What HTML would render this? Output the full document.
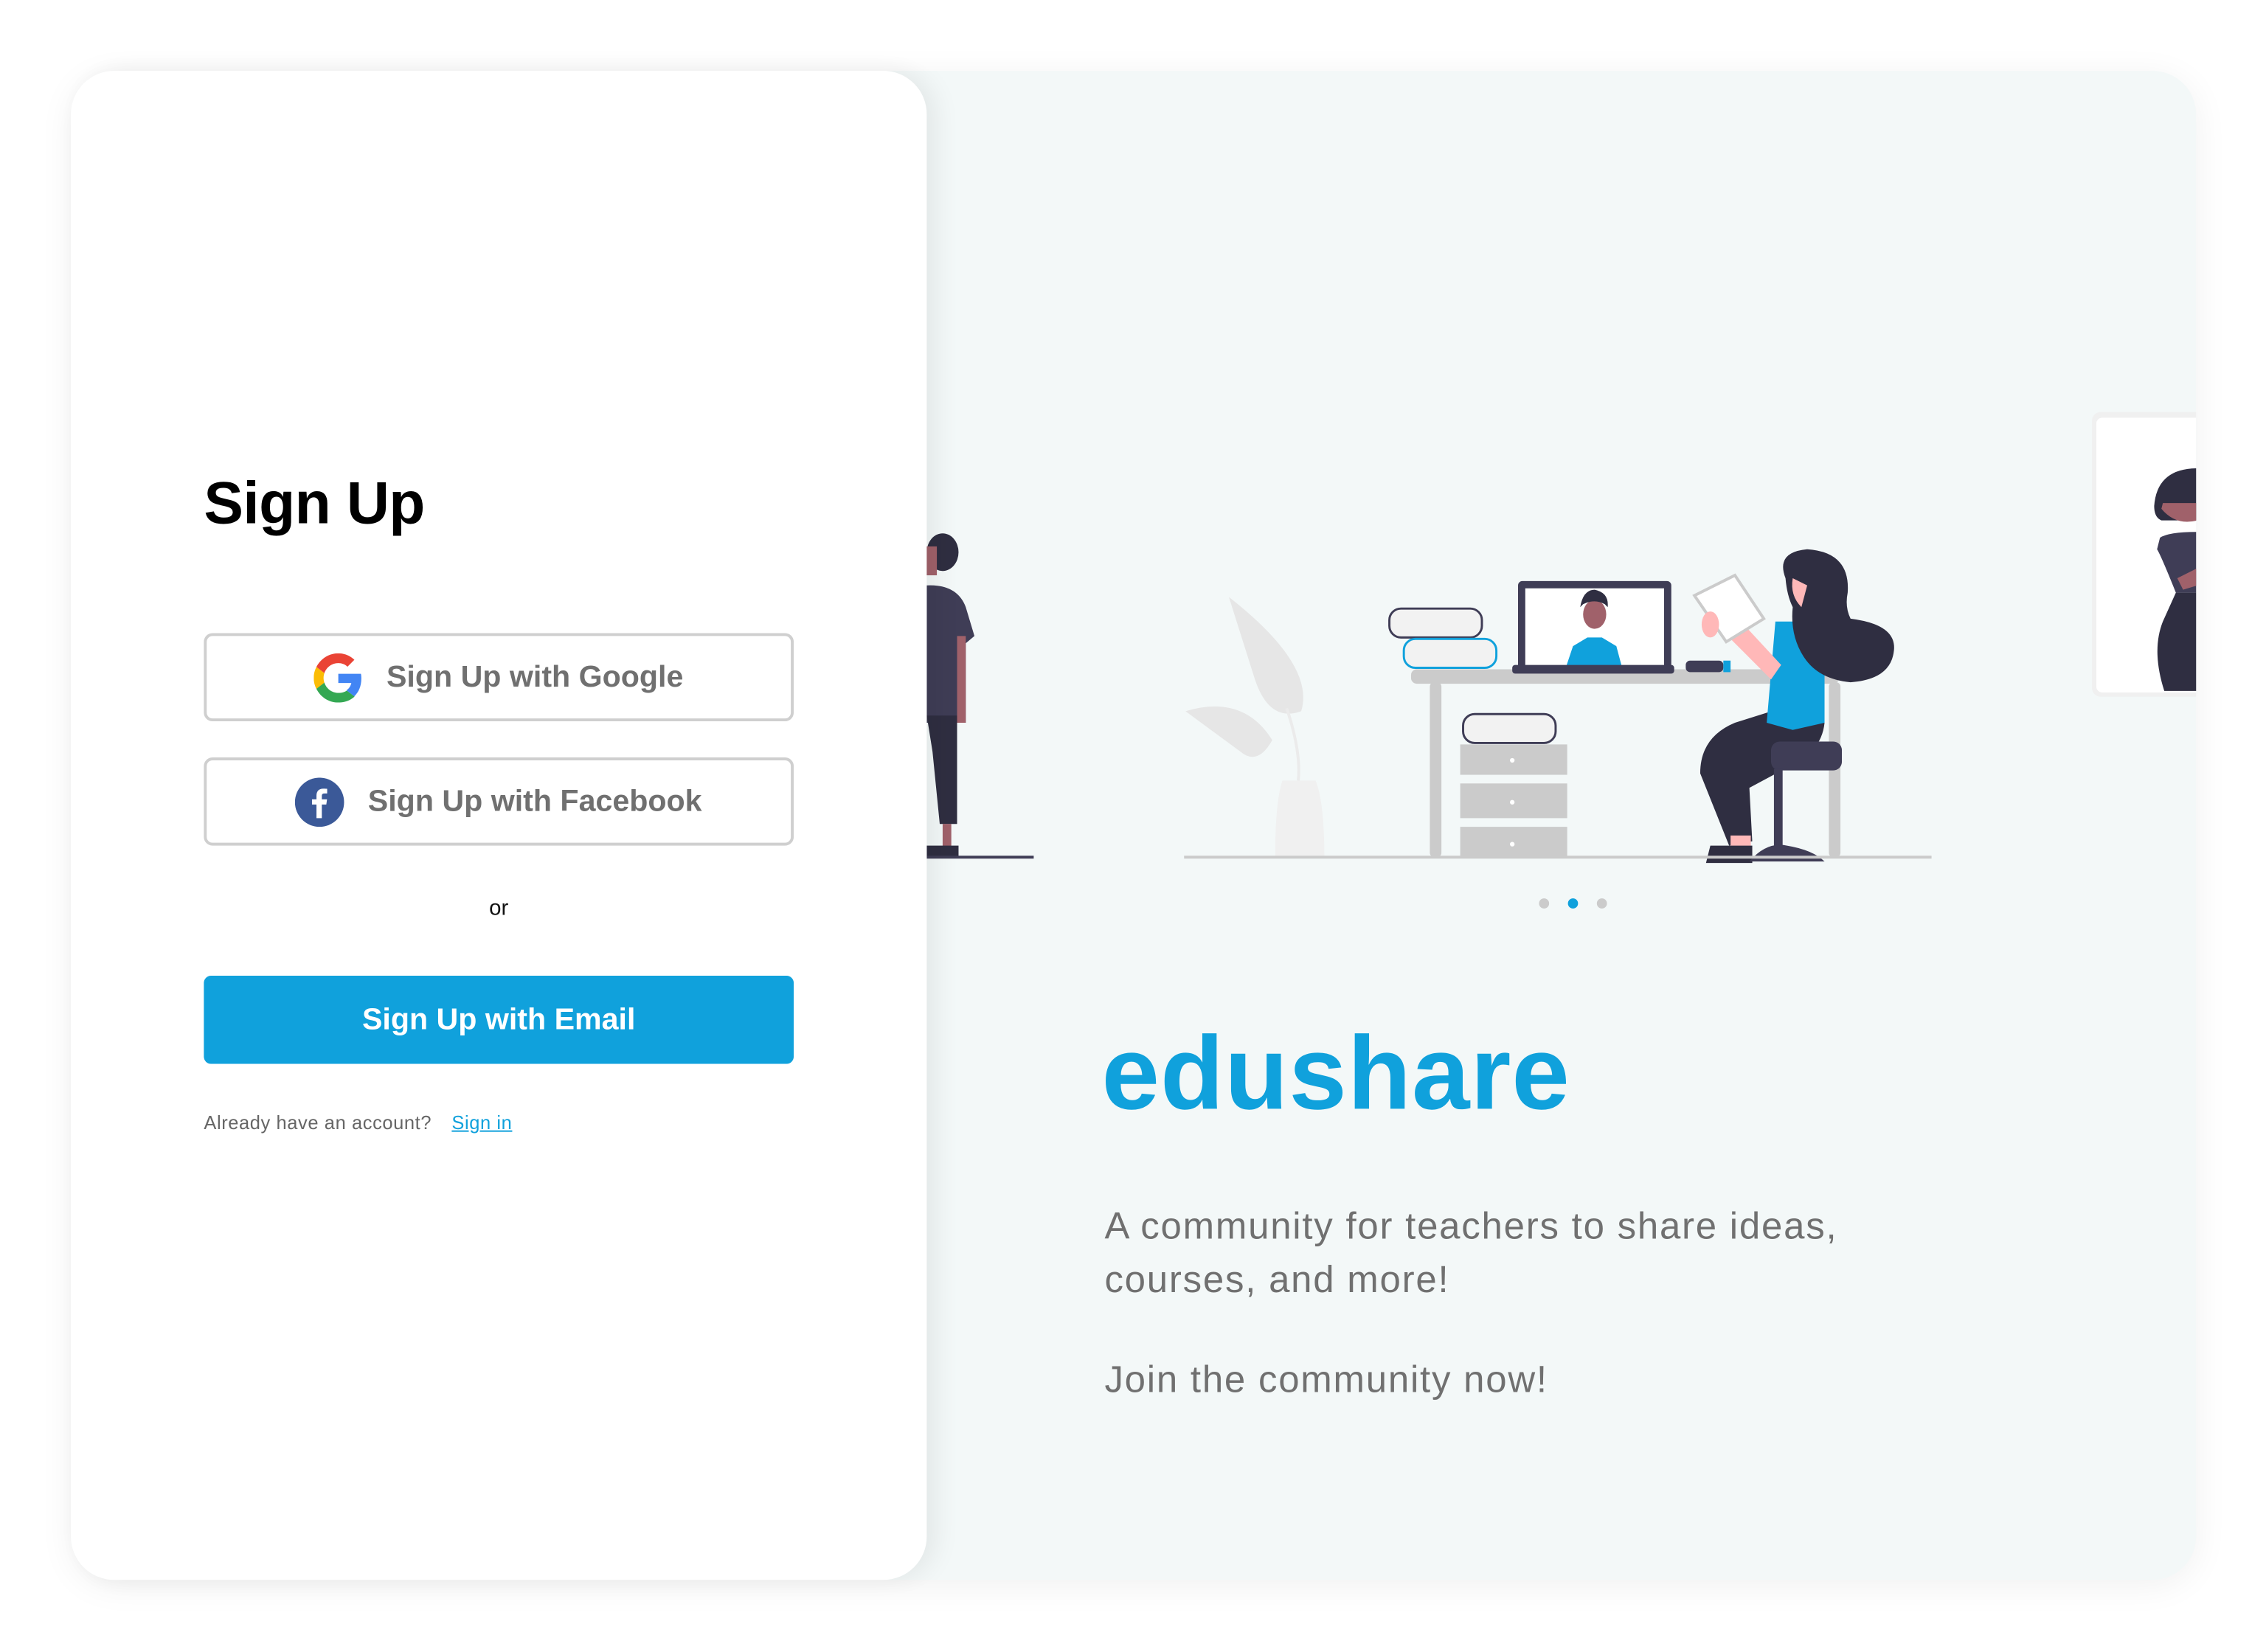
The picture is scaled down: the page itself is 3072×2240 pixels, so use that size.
<!DOCTYPE html>
<html><head><meta charset="utf-8"><style>
html,body{margin:0;padding:0;background:#fff;width:3072px;height:2240px;overflow:hidden}
#w{position:absolute;left:0;top:0;width:1568px;height:1143px;transform:scale(1.96);transform-origin:0 0;font-family:"Liberation Sans",sans-serif}
.card{position:absolute;left:49px;top:49px;width:1470px;height:1044px;border-radius:30px;background:#f3f8f8;box-shadow:0 4px 24px rgba(0,0,0,.06);overflow:hidden}
.left{position:absolute;left:49px;top:49px;width:592px;height:1044px;border-radius:30px;background:#fff;box-shadow:6px 0 18px rgba(0,0,0,.07);z-index:3}
h1{position:absolute;left:92px;top:276px;margin:0;font-size:41px;font-weight:bold;color:#000;letter-spacing:-0.3px}
.btn{position:absolute;left:92px;width:404px;height:57px;border:2px solid #cfcfcf;border-radius:6px;box-sizing:content-box;color:#707070;font-size:21px;font-weight:bold;display:flex;align-items:center;justify-content:center}
.btn svg{margin-right:16px}
.or{position:absolute;left:0;width:592px;top:571px;text-align:center;font-size:15px;color:#111}
.em{position:absolute;left:92px;top:626px;width:408px;height:61px;background:#10a1dc;border-radius:5px;color:#fff;font-size:21px;font-weight:bold;display:flex;align-items:center;justify-content:center}
.al{position:absolute;left:92px;top:720px;font-size:13px;color:#666;letter-spacing:0.3px}
.al a{color:#10a1dc;text-decoration:underline;margin-left:10px}
.brand{position:absolute;left:762px;top:702px;font-size:72px;font-weight:bold;color:#10a1dc;letter-spacing:0.5px}
.p{position:absolute;left:764px;font-size:26px;color:#707070;line-height:37px;letter-spacing:0.9px}
</style></head><body><div id="w">
<div class="card"></div>
<svg style="position:absolute;left:0;top:0" width="1568" height="1143" viewBox="0 0 1568 1143">
<defs><clipPath id="c"><rect x="49" y="49" width="1470" height="1044" rx="30"/></clipPath></defs>
<g clip-path="url(#c)">
<ellipse cx="652" cy="382" rx="11" ry="13" fill="#2f2e41"/>
<rect x="640" y="378" width="8" height="20" fill="#a0616a"/>
<path d="M641 405 Q662 404 668 420 L674 440 L668 445 L668 500 L641 500Z" fill="#3f3d56"/>
<rect x="662" y="440" width="6" height="60" fill="#a0616a"/>
<path d="M641 495 L662 495 L662 570 L650 570 L645 520Z" fill="#2f2e41"/>
<rect x="652" y="570" width="6" height="17" fill="#a0616a"/>
<rect x="641" y="585" width="22" height="8" fill="#2f2e41"/>
<rect x="641" y="592" width="74" height="2" fill="#3f3d56"/>
<rect x="1447" y="285" width="90" height="197" rx="6" fill="#f0f0f0"/>
<rect x="1450" y="289" width="90" height="190" rx="4" fill="#fff"/>
<path d="M1490 350 Q1492 324 1520 324 L1520 360 L1495 360 Q1490 358 1490 350Z" fill="#2f2e41"/>
<path d="M1495 352 Q1505 364 1520 360 L1520 348 L1496 348Z" fill="#a0616a"/>
<path d="M1494 372 Q1500 368 1520 368 L1520 410 L1505 410 Q1495 385 1492 380Z" fill="#3f3d56"/>
<path d="M1506 400 L1520 393 L1520 405 L1510 408Z" fill="#a0616a"/>
<path d="M1505 410 L1520 410 L1520 478 L1497 478 Q1488 450 1496 430Z" fill="#2f2e41"/>
<path d="M850 413 Q910 460 900 492 Q878 500 868 470 Z" fill="#e6e6e6"/>
<path d="M820 492 Q860 480 880 512 Q870 530 858 520 Z" fill="#e6e6e6"/>
<path d="M890 490 Q900 520 898 540" stroke="#ebebeb" stroke-width="2" fill="none"/>
<path d="M887 540 L910 540 Q916 555 916 593 L882 593 Q882 555 887 540Z" fill="#f0f0f0"/>
<rect x="976" y="463" width="296" height="10" rx="4" fill="#cbcbcb"/>
<rect x="989" y="472" width="8" height="121" rx="3" fill="#cbcbcb"/>
<rect x="1265" y="472" width="8" height="121" rx="3" fill="#cbcbcb"/>
<rect x="1010" y="515" width="74" height="21" fill="#cbcbcb"/>
<rect x="1010" y="542" width="74" height="24" fill="#cbcbcb"/>
<rect x="1010" y="572" width="74" height="21" fill="#cbcbcb"/>
<circle cx="1046" cy="526" r="1.6" fill="#fff"/><circle cx="1046" cy="555" r="1.6" fill="#fff"/><circle cx="1046" cy="584" r="1.6" fill="#fff"/>
<rect x="1012" y="494" width="64" height="20" rx="8" fill="#f2f2f2" stroke="#3f3d56" stroke-width="1.5"/>
<rect x="961" y="421" width="64" height="20" rx="8" fill="#f2f2f2" stroke="#3f3d56" stroke-width="1.5"/>
<rect x="971" y="442" width="64" height="20" rx="8" fill="#f2f2f2" stroke="#10a1dc" stroke-width="1.5"/>
<rect x="1050" y="402" width="106" height="62" rx="3" fill="#3f3d56"/>
<rect x="1055" y="407" width="96" height="55" fill="#fff"/>
<ellipse cx="1103" cy="425" rx="8" ry="10" fill="#a0616a"/>
<path d="M1093 420 Q1095 408 1103 408 Q1113 410 1112 420 L1110 418 Q1103 414 1095 418Z" fill="#2f2e41"/>
<path d="M1083 462 L1088 447 L1098 441 L1108 441 L1118 447 L1122 462Z" fill="#10a1dc"/>
<rect x="1046" y="460" width="112" height="6" rx="2" fill="#3f3d56"/>
<rect x="1166" y="457" width="26" height="8" rx="3" fill="#3f3d56"/><rect x="1192" y="457" width="5" height="8" fill="#10a1dc"/>
<path d="M1254 483 L1262 500 Q1260 520 1238 530 L1210 545 L1212 582 L1196 585 L1176 535 Q1176 510 1200 500Z" fill="#2f2e41"/>
<rect x="1197" y="578" width="14" height="10" fill="#ffb8b8"/>
<path d="M1180 597 L1183 585 L1212 585 L1212 597Z" fill="#2f2e41"/>
<rect x="1225" y="513" width="49" height="20" rx="6" fill="#3f3d56"/>
<rect x="1227" y="532" width="6" height="56" fill="#3f3d56"/>
<path d="M1210 596 Q1222 582 1236 585 Q1254 588 1262 596Z" fill="#3f3d56"/>
<path d="M1228 430 L1262 430 L1262 500 L1240 505 L1222 500 Z" fill="#10a1dc"/>
<path d="M1180 425 L1225 470 L1232 460 L1195 420Z" fill="#ffb8b8"/>
<path d="M1172 412 L1200 398 L1220 428 L1194 444Z" fill="#fff" stroke="#cbcbcb" stroke-width="2"/>
<ellipse cx="1183" cy="432" rx="6" ry="9" fill="#ffb8b8"/>
<path d="M1235 400 Q1228 382 1250 380 Q1280 382 1278 410 Q1276 420 1280 428 Q1312 432 1310 450 Q1308 470 1280 472 Q1258 470 1248 455 Q1238 440 1240 420 Q1236 412 1235 400Z" fill="#2f2e41"/>
<path d="M1240 400 Q1238 412 1246 420 L1250 405Z" fill="#ffb8b8"/>
<rect x="819" y="592" width="517" height="2" fill="#cbcbcb"/>
<circle cx="1068" cy="625" r="3.5" fill="#cbcbcb"/><circle cx="1088" cy="625" r="3.5" fill="#10a1dc"/><circle cx="1108" cy="625" r="3.5" fill="#cbcbcb"/>
</g></svg>
<div class="left">
<h1>Sign Up</h1>
<div class="btn" style="top:389px"><svg width="34" height="34" viewBox="0 0 48 48"><path fill="#EA4335" d="M24 9.5c3.5 0 6.6 1.2 9 3.5l6.7-6.7C35.6 2.4 30.2 0 24 0 14.6 0 6.6 5.4 2.6 13.3l7.8 6C12.3 13.7 17.6 9.5 24 9.5z"/><path fill="#4285F4" d="M46.5 24.5c0-1.6-.1-3.1-.4-4.5H24v9h12.7c-.6 2.9-2.200 5.4-4.7 7.1l7.6 5.9c4.4-4.1 6.9-10.1 6.9-17.5z"/><path fill="#FBBC05" d="M10.4 28.7c-.5-1.4-.8-3-.8-4.7s.3-3.2.8-4.7l-7.8-6C.9 16.6 0 20.2 0 24s.9 7.4 2.6 10.7l7.8-6z"/><path fill="#34A853" d="M24 48c6.5 0 11.9-2.1 15.9-5.8l-7.6-5.9c-2.1 1.4-4.9 2.3-8.300 2.3-6.4 0-11.7-4.200-13.6-10l-7.8 6C6.6 42.6 14.6 48 24 48z"/></svg>Sign Up with Google</div>
<div class="btn" style="top:475px"><svg width="34" height="34" viewBox="0 0 34 34"><circle cx="17" cy="17" r="17" fill="#3b5998"/><path d="M18.6 28V18.6h3.1l.5-3.6h-3.6v-2.3c0-1 .3-1.8 1.8-1.8h1.9V7.7c-.3 0-1.5-.1-2.8-.1-2.8 0-4.6 1.7-4.6 4.8V15h-3.1v3.6h3.1V28z" fill="#fff"/></svg>Sign Up with Facebook</div>
<div class="or">or</div>
<div class="em">Sign Up with Email</div>
<div class="al">Already have an account? <a>Sign in</a></div>
</div>
<div class="brand">edushare</div>
<div class="p" style="top:830px">A community for teachers to share ideas,<br>courses, and more!</div>
<div class="p" style="top:936px">Join the community now!</div>
</div></body></html>
